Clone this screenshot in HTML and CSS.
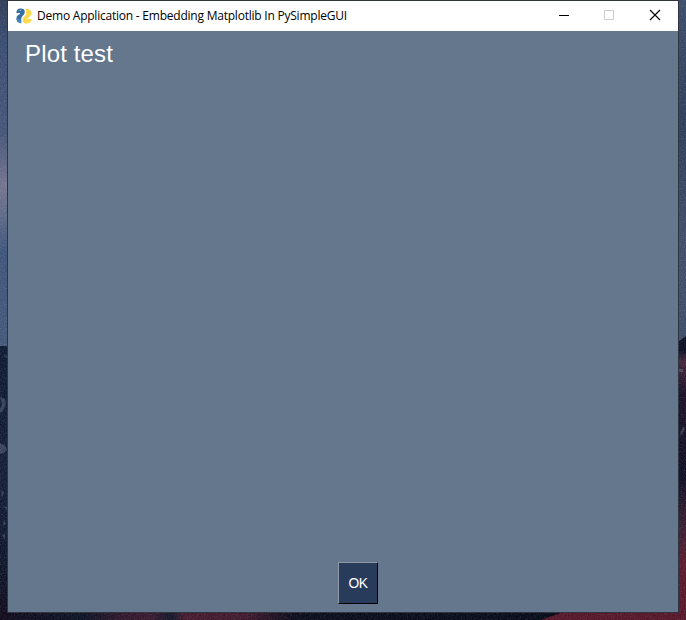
FILE: index.html
```html
<!DOCTYPE html>
<html lang="en">
<head>
<meta charset="utf-8">
<title>Demo Application</title>
<link rel="stylesheet" href="styles.css">
</head>
<body>
<svg class="wallpaper" width="686" height="620" viewBox="0 0 686 620" aria-hidden="true">
  <defs>
    <linearGradient id="skyL" x1="0" y1="0" x2="0" y2="1">
      <stop offset="0" stop-color="#303d57"/><stop offset=".12" stop-color="#3a4d72"/>
      <stop offset=".38" stop-color="#455578"/><stop offset=".53" stop-color="#74748f"/>
      <stop offset=".61" stop-color="#5f6a88"/><stop offset=".72" stop-color="#3e547a"/>
      <stop offset="1" stop-color="#455879"/>
    </linearGradient>
    <linearGradient id="skyR" x1="0" y1="0" x2="0" y2="1">
      <stop offset="0" stop-color="#3d4d69"/><stop offset=".35" stop-color="#2c3e59"/>
      <stop offset=".7" stop-color="#414d69"/><stop offset="1" stop-color="#3b4e67"/>
    </linearGradient>
    <linearGradient id="landL" x1="0" y1="0" x2="0" y2="1">
      <stop offset="0" stop-color="#0e1a32"/><stop offset=".5" stop-color="#151d38"/>
      <stop offset=".8" stop-color="#0e162b"/><stop offset="1" stop-color="#130a1d"/>
    </linearGradient>
    <linearGradient id="landR" x1="0" y1="0" x2="0" y2="1">
      <stop offset="0" stop-color="#070f22"/><stop offset=".05" stop-color="#0b1023"/><stop offset=".09" stop-color="#44263d"/>
      <stop offset=".2" stop-color="#1b1228"/><stop offset=".5" stop-color="#100f24"/>
      <stop offset=".68" stop-color="#3c1f34"/><stop offset=".8" stop-color="#5b1a2f"/>
      <stop offset="1" stop-color="#551729"/>
    </linearGradient>
    <linearGradient id="ground">
      <stop offset="0" stop-color="#100a1c"/><stop offset=".12" stop-color="#0c1325"/>
      <stop offset=".18" stop-color="#31172b"/><stop offset=".22" stop-color="#38192e"/>
      <stop offset=".25" stop-color="#13172b"/><stop offset=".27" stop-color="#461b2e"/>
      <stop offset=".36" stop-color="#3e192d"/><stop offset=".43" stop-color="#0a0c1b"/>
      <stop offset="1" stop-color="#050916"/>
    </linearGradient>
    <filter id="grain" x="0" y="0" width="1" height="1">
      <feTurbulence type="fractalNoise" baseFrequency=".7" numOctaves="2" result="n"/>
      <feColorMatrix in="n" type="matrix" values="0 0 0 0 1  0 0 0 0 1  0 0 0 0 1  .6 0 0 0 -.23"/>
    </filter>
  </defs>
  <rect width="8" height="350" fill="url(#skyL)"/>
  <rect x="678" width="8" height="350" fill="url(#skyR)"/>
  <rect y="346" width="8" height="274" fill="url(#landL)"/>
  <path d="M678 342l8-6v284h-8z" fill="url(#landR)"/>
  <rect y="612" width="686" height="8" fill="url(#ground)"/>
  <path d="M541 620l22-8h123v8z" fill="#551729"/>
  <g fill="#65708c" opacity=".45">
    <path d="M0 397l5 2 1 5-3 7-3 2v-4l2-5zM0 443l4 2 3 4-3 4-4 1zM3 355l4 1v2zM3 506l4 1v3zM2 535l3-1v6zM1 490l3 3-2 4zM4 520l2 4-3 2z"/>
    <path d="M679 369h4v3h-4zM683 427l2 1-3 7-2-1z"/>
  </g>
  <rect width="686" height="620" filter="url(#grain)" opacity=".4"/>
</svg>
<main class="window">
  <header class="titlebar">
    <svg class="logo" width="16" height="16" viewBox="0 0 16 16" aria-hidden="true">
      <path fill="#3471a2" d="M.4 5Q.4.7 4.3.6 8.8.4 8.8 4 8.8 6.5 6.8 7.8 5.2 9 5.2 11v4.3Q.5 14.7.4 10.4.4 8 2.5 6.8L4 5.9V5z"/>
      <path fill="#ffd94b" d="M9.6.8Q15.3 1 15.5 5 15.6 7.7 13.3 9L11.5 10.2V11h3.9Q15.2 15.4 11.2 15.6 6.6 15.7 6.6 12 6.7 9.6 8.7 8.3 10.4 7.2 10.2 4.4z"/>
      <path d="M.5 10.5l4.7 1v3.8Q1 14.5.5 10.5z" fill="#438bbd"/>
      <circle cx="4.3" cy="2.5" r=".6" fill="#dce9f2"/><circle cx="11.5" cy="13.7" r=".6" fill="#fff"/>
    </svg>
    <h1 class="title">Demo Application - Embedding Matplotlib In PySimpleGUI</h1>
    <div class="controls">
      <svg width="46" height="30"><path d="M10 14.5h10" stroke="#000"/></svg>
      <svg width="46" height="30"><path d="M9.5 9.5h9v9h-9z" fill="none" stroke="#ccc"/></svg>
      <svg width="46" height="30"><path d="M9 9l10 10M19 9L9 19" stroke="#000" stroke-width="1.1"/></svg>
    </div>
  </header>
  <section class="content">
    <p class="label">Plot test</p>
    <button class="ok">OK</button>
  </section>
</main>
</body>
</html>
```
FILE: styles.css
```css
* { box-sizing: border-box; }
body {
  margin: 0;
  width: 686px;
  height: 620px;
  padding: 0 7px 7px;
  overflow: hidden;
  background: #10172a;
}
.wallpaper {
  position: absolute;
  inset: 0;
  z-index: -1;
}
.window {
  display: flex;
  flex-direction: column;
  width: 672px;
  height: 613px;
  border: 1px solid #30343f;
}
.titlebar {
  display: flex;
  align-items: center;
  flex: none;
  height: 30px;
  padding-left: 8px;
  background: #fff;
}
.logo { display: block; flex: none; margin-top: -1px; }
.title {
  margin: 0 0 0 5px;
  color: #000;
  font: 400 12px/20px "Open Sans", "Noto Sans", sans-serif;
  letter-spacing: -0.225px;
  white-space: nowrap;
}
.controls { display: flex; flex: none; margin-left: auto; margin-right: -9px; }
.controls svg { display: block; }
.content {
  display: flex;
  flex: 1;
  flex-direction: column;
  align-items: flex-start;
  justify-content: space-between;
  padding: 8px 0;
  background: #64778d;
}
.label {
  margin: 0 0 0 17px;
  color: #fff;
  font: 24px/30px "Liberation Sans", Arial, sans-serif;
  letter-spacing: 0.15px;
}
.ok {
  width: 40px;
  height: 42px;
  margin-left: 330px;
  padding: 1px 0 0;
  border: 1px solid #000;
  border-top-color: #9199a8;
  border-left-color: #9199a8;
  border-radius: 0;
  background: #283b5b;
  color: #fff;
  font: 13.8px/39px "Liberation Sans", Arial, sans-serif;
  letter-spacing: -0.5px;
}
```
